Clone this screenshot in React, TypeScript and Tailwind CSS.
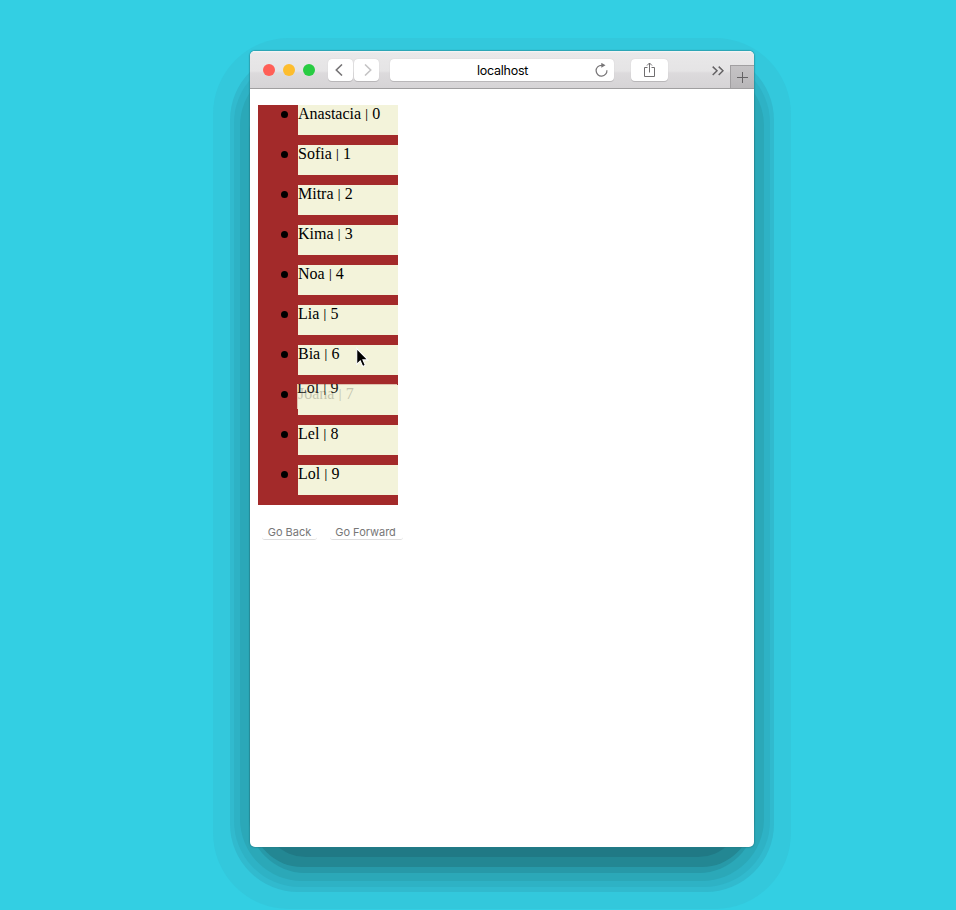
const names = ["Anastacia", "Sofia", "Mitra", "Kima", "Noa", "Lia", "Bia", "Joana", "Lel", "Lol"];

function Label({ name, count }: { name: string; count: number }) {
  return (
    <>
      {name} <span className="inline-block origin-[50%_40%] scale-y-[0.8]">|</span> {count}
    </>
  );
}

function Shadow() {
  return (
    <div aria-hidden="true">
      <div className="absolute top-[38px] left-[213px] h-[871px] w-[578px] rounded-[76px] bg-[#33c8dc]" />
      <div className="absolute top-[52px] left-[230px] h-[840px] w-[544px] rounded-[68px] bg-[#31bace]" />
      <div className="absolute top-[57px] left-[234px] h-[830px] w-[536px] rounded-[66px] bg-[#2eb2c5]" />
      <div className="absolute top-[64px] left-[240px] h-[817px] w-[524px] rounded-[62px] bg-[#2ba8b8]" />
      <div className="absolute top-[80px] left-[249px] h-[793px] w-[506px] rounded-[56px] bg-[#2799a8]" />
      <div className="absolute top-[90px] left-[252px] h-[777px] w-[500px] rounded-[50px] bg-[#238793]" />
      <div className="absolute top-[100px] left-[262px] h-[757px] w-[480px] rounded-[44px] bg-[#207985]" />
    </div>
  );
}

function Toolbar() {
  return (
    <header className="flex h-[38px] border-b border-[#a09fa0] bg-[linear-gradient(to_bottom,#f7f7f7_0px,#e9e8e9_2px,#e5e4e5_20px,#dcdadc_22px,#d6d4d6_37px)]">
      <div className="flex w-full items-start pl-[13px]">
        <div className="mt-[13px] flex gap-2">
          <span className="size-3 rounded-full bg-[#ff5f57]" />
          <span className="size-3 rounded-full bg-[#fdbd2e]" />
          <span className="size-3 rounded-full bg-[#28cc42]" />
        </div>
        <div className="mt-2 ml-[13px] flex gap-px">
          <button aria-label="Back" className="flex h-[22px] w-[25px] items-center justify-center rounded-[4px] bg-white pr-[3px] shadow-[0_1px_0_#b9b7b9,0_0_1px_#c4c2c4]">
            <svg width="8" height="12" viewBox="0 0 8 12" fill="none" stroke="#777577" strokeWidth="1.6"><path d="M7 .5 1.3 6 7 11.5" /></svg>
          </button>
          <button aria-label="Forward" className="flex h-[22px] w-[25px] items-center justify-center rounded-[4px] bg-white pl-[2px] shadow-[0_1px_0_#b9b7b9,0_0_1px_#c4c2c4]">
            <svg width="8" height="12" viewBox="0 0 8 12" fill="none" stroke="#c5c4c5" strokeWidth="1.6"><path d="m1 .5 5.7 5.5L1 11.5" /></svg>
          </button>
        </div>
        <div className="mt-2 ml-[11px] flex h-[22px] w-[224px] items-center rounded-[4px] bg-white pr-[6px] shadow-[0_1px_0_#b9b7b9,0_0_1px_#c4c2c4]">
          <span className="flex-1 pt-[2px] pl-5 text-center font-[Inter,sans-serif] text-[12.5px] tracking-[-0.25px] text-black">localhost</span>
          <svg width="13" height="14" viewBox="0 0 13 14" fill="none" stroke="#777577" strokeWidth="1.2">
            <path d="M11.9 7.2A5.4 5.4 0 1 1 6.5 2.3h1.2" />
            <path d="M6.3-.2v5l4.2-2.5z" fill="#777577" stroke="none" />
          </svg>
        </div>
        <button aria-label="Share" className="mt-2 ml-[17px] flex h-[22px] w-[37px] items-center justify-center rounded-[4px] bg-white shadow-[0_1px_0_#b9b7b9,0_0_1px_#c4c2c4]">
          <svg width="13" height="16" viewBox="0 0 13 16" fill="none" stroke="#706e70"><path d="M4.5 5.5h-3v9h10v-9h-3M6.5 10.5V1M4 3.5 6.5 1 9 3.5" /></svg>
        </button>
        <svg className="mt-[15px] ml-[44px]" width="12" height="10" viewBox="0 0 12 10" fill="none" stroke="#656365" strokeWidth="1.5"><path d="M.7.6 5 4.8.7 9M6.7.6 11 4.8 6.7 9" /></svg>
        <button aria-label="New tab" className="mt-[14px] ml-auto flex h-[23px] w-[24px] items-center justify-center border-t border-l border-[#a19fa1] bg-linear-to-b from-[#c5c3c5] to-[#b9b7b9]">
          <svg width="11" height="11" viewBox="0 0 11 11" stroke="#656365"><path d="M5.5 0v11M0 5.5h11" /></svg>
        </button>
      </div>
    </header>
  );
}

export default function App() {
  return (
    <main className="relative h-[910px] w-[956px] overflow-hidden bg-[#33cfe3] pt-[51px] pl-[250px]">
      <Shadow />
      <section className="relative h-[796px] w-[504px] overflow-hidden rounded-[5px] bg-white shadow-[0_0_1px_1px_#237d8880]">
        <Toolbar />
        <ul className="mt-4 ml-2 w-[140px] bg-[#a32a2a] pl-10 font-['Liberation_Serif',serif] text-[16px] leading-[18px] text-black">
          {names.map((name, i) => (
            <li key={name} className="h-10">
              <div className="relative h-[30px] bg-[#f3f3da]">
                <span className="absolute top-[6px] left-[-17px] size-[6.5px] rounded-full bg-black" />
                <span className={i === 7 ? "whitespace-nowrap opacity-80" : "whitespace-nowrap"}><Label name={name} count={i} /></span>
                {i === 7 && (
                  <div className="absolute -top-px -left-px h-[25px] w-[100px] overflow-hidden bg-[#f3f3da]/75">
                    <div className="-mt-[5px] whitespace-nowrap opacity-90"><Label name="Lol" count={9} /></div>
                  </div>
                )}
              </div>
            </li>
          ))}
        </ul>
        <div className="mt-5 ml-3 flex gap-[13px] font-[Inter,sans-serif] text-[11px] leading-[14px] text-[#777]">
          <button className="h-[15px] w-[55px] rounded-[3px] border-b border-[#dedede] whitespace-nowrap">Go Back</button>
          <button className="h-[15px] w-[73px] rounded-[3px] border-b border-[#dedede] pr-[2px] whitespace-nowrap">Go Forward</button>
        </div>
        <svg className="absolute top-[296px] left-[105px]" width="15" height="22" viewBox="0 0 14 21">
          <path d="M1.5 1.5v15l3.4-3.2 2.3 5.3 2.5-1.1-2.3-5.2h4.7z" fill="#000" stroke="#fff" strokeWidth="1" />
        </svg>
      </section>
    </main>
  );
}
